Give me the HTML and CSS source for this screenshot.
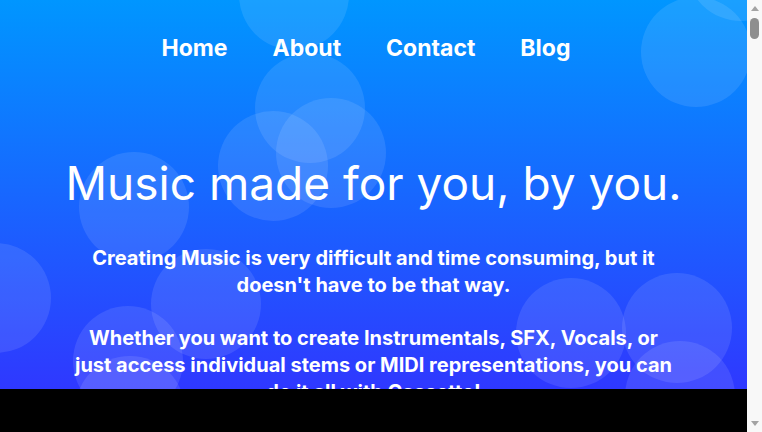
FILE: index.html
```html
<!doctype html>
<html>
<head>
<meta charset="utf-8">
<title>Cassette</title>
<link rel="stylesheet" href="styles.css">
</head>

<body>

<header class="hero">
    <!-- 背景气泡 -->
    <div class="bubbles">
        <span class="b1"></span>
        <span class="b2"></span>
        <span class="b3"></span>
        <span class="b4"></span>
        <span class="b5"></span>
        <span class="b6"></span>
        <span class="b7"></span>
        <span class="b8"></span>
        <span class="b9"></span>
        <span class="b10"></span>
        <span class="b11"></span>
        <span class="b12"></span>
        <span class="b13"></span>
        <span class="b14"></span>
    </div>

    <nav class="nav">
        <a href="#">Home</a>
        <a href="#">About</a>
        <a href="#">Contact</a>
        <a href="#">Blog</a>
    </nav>

    <div class="intro">
        <h1>Music made for you, by you.</h1>
        <p>Creating Music is very difficult and time consuming, but it doesn't have to be that way.</p>
        <p>Whether you want to create Instrumentals, SFX, Vocals, or just access individual stems or MIDI representations, you can do it all with Cassette!</p>
    </div>
</header>

<main class="content"></main>

<!-- 滚动条 -->
<div class="scrollbar">
    <i class="up"></i>
    <i class="thumb"></i>
    <i class="down"></i>
</div>

</body>
</html>
```

FILE: styles.css
```css
*{ margin: 0; padding: 0; box-sizing: border-box; }
html{ overflow: hidden; }
body{ padding-right: 15px; background: #f8f8f8; font-family: Inter, "Noto Sans", sans-serif; color: #fff; }
a{ color: #fff; text-decoration: none; }

/* 顶部 */
.hero{ height: 90vh; overflow: hidden; position: relative; background: linear-gradient(to bottom, #0096ff, #2f38ff); }

/* 气泡 */
.bubbles span{ position: absolute; width: 110px; height: 110px; border-radius: 50%; background: rgba(255,255,255,.1); }
.b1{ left: 239px; top: -60px; }
.b2{ left: 255px; top: 53px; }
.b3{ left: 218px; top: 111px; }
.b4{ left: 276px; top: 98px; }
.b5{ left: 79px; top: 152px; }
.b6{ left: 641px; top: -3px; }
.b7{ left: 686px; top: -89px; }
.b8{ left: -59px; top: 243px; }
.b9{ left: 151px; top: 249px; }
.b10{ left: 73px; top: 306px; }
.b11{ left: 75px; top: 356px; }
.b12{ left: 516px; top: 278px; }
.b13{ left: 622px; top: 273px; }
.b14{ left: 625px; top: 341px; }

/* 导航 */
.nav{ display: flex; justify-content: center; gap: 45px; padding: 34px 15px 0 0; position: relative; }
.nav a{ font-size: 23px; font-weight: 700; line-height: 29px; }

/* 文字 */
.intro{ max-width: 610px; margin: 0 auto; padding-top: 92px; text-align: center; position: relative; }
.intro h1{ font-size: 46px; font-weight: 400; line-height: 56px; margin: 0 -80px 34px; }
.intro p{ font-size: 20px; font-weight: 700; line-height: 27px; margin-bottom: 26px; }

.content{ height: 6000px; background: #000; }

/* 滚动条 */
.scrollbar{ position: fixed; top: 0; right: 0; width: 15px; height: 100vh; background: #f8f8f8; display: flex; flex-direction: column; align-items: center; }
.scrollbar i{ display: block; }
.scrollbar .up{ margin-top: 6px; border-left: 4.5px solid transparent; border-right: 4.5px solid transparent; border-bottom: 5px solid #a3a3a3; }
.scrollbar .thumb{ width: 9px; height: 21px; margin-top: 7px; border-radius: 5px; background: #8e8e8e; }
.scrollbar .down{ margin-top: auto; margin-bottom: 6px; border-left: 4.5px solid transparent; border-right: 4.5px solid transparent; border-top: 5px solid #a3a3a3; }
```
